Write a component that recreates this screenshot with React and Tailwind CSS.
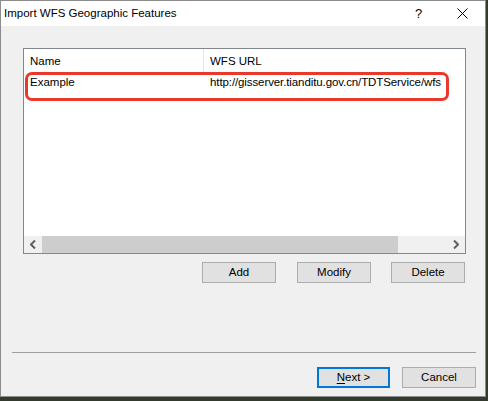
import React from 'react'

const font = { fontFamily: '"Liberation Sans", Arial, sans-serif' }

const DlgButton = ({ children, className = '' }) => (
  <button
    className={`h-[21px] w-[74px] border border-[#adadad] bg-[#e1e1e1] text-[11.5px] text-black leading-none ${className}`}
  >
    {children}
  </button>
)

const App = () => {
  return (
    <div className="w-[488px] h-[401px] bg-[#323b2c] overflow-hidden" style={font}>
      <div className="w-[486px] h-[397px] border border-[#8c8c8c] bg-[#f0f0f0] flex flex-col">
        {/* title bar */}
        <div className="h-[25px] bg-white flex items-center pl-[3px] text-[12px] text-black">
          <span className="flex-1 text-[11.5px]">Import WFS Geographic Features</span>
          <span className="w-[14px] text-[13px] mr-[28px]">?</span>
          <svg width="11" height="11" viewBox="0 0 11 11" className="mr-[17px]">
            <path d="M0.5 0.5 L10.5 10.5 M10.5 0.5 L0.5 10.5" stroke="#000" strokeWidth="1" />
          </svg>
        </div>

        {/* list */}
        <div className="pl-[22px] pt-[22px]">
          <div className="relative w-[443px] h-[206px] border border-[#828790] bg-white flex flex-col">
            <div className="flex h-[25px] items-center text-[11.5px] text-black">
              <div className="w-[180px] h-full flex items-center pl-[6px] border-r border-[#e5e5e5]">Name</div>
              <div className="pl-[6px]">WFS URL</div>
            </div>
            <div className="flex h-[18px] items-center text-[11.5px] text-black">
              <div className="w-[181px] pl-[6px]">Example</div>
              <div className="pl-[5px] whitespace-nowrap tracking-[-0.1px]">http://gisserver.tianditu.gov.cn/TDTService/wfs</div>
            </div>
            <div className="flex-1" />
            {/* horizontal scrollbar */}
            <div className="h-[17px] flex bg-[#f0f0f0] items-center">
              <div className="w-[18px] flex justify-center">
                <svg width="6" height="9" viewBox="0 0 6 9">
                  <path d="M5 0.5 L1 4.5 L5 8.5" stroke="#606060" strokeWidth="2" fill="none" />
                </svg>
              </div>
              <div className="w-[356px] h-full bg-[#cdcdcd]" />
              <div className="flex-1" />
              <div className="w-[18px] flex justify-center">
                <svg width="6" height="9" viewBox="0 0 6 9">
                  <path d="M1 0.5 L5 4.5 L1 8.5" stroke="#606060" strokeWidth="2" fill="none" />
                </svg>
              </div>
            </div>
            {/* highlight round the first row */}
            <div className="absolute left-[1px] top-[23px] w-[424px] h-[29px] border-[3px] border-[#e8392a] rounded-[7px]" />
          </div>
        </div>

        {/* list actions */}
        <div className="flex pl-[201px] pt-[8px] gap-[21px]">
          <DlgButton>Add</DlgButton>
          <DlgButton>Modify</DlgButton>
          <DlgButton className="-ml-[1px]">Delete</DlgButton>
        </div>

        <div className="mt-[69px] ml-[11px] w-[464px] h-px bg-[#a0a0a0]" />

        {/* wizard buttons */}
        <div className="flex pl-[316px] pt-[14px] gap-[12px]">
          <button className="h-[21px] w-[73px] border-2 border-[#0078d7] bg-[#e1e1e1] text-[11.5px] text-black leading-none">
            <span className="underline underline-offset-2">N</span>ext &gt;
          </button>
          <DlgButton>Cancel</DlgButton>
        </div>
      </div>
    </div>
  )
}

export default App
